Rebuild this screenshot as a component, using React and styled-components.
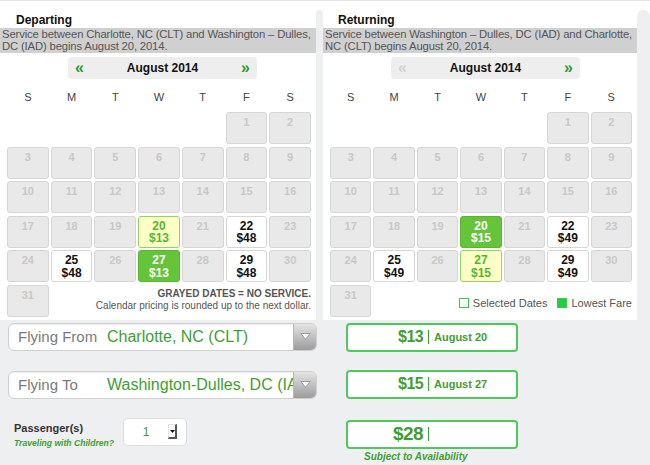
import React from "react";
import styled, { createGlobalStyle } from "styled-components";

const GREEN = "#3f9e33";

const Global = createGlobalStyle`
  html, body { margin: 0; padding: 0; }
  body {
    background: #eeeff1;
    font-family: "Liberation Sans", Arial, sans-serif;
    width: 650px;
    height: 465px;
    overflow: hidden;
  }
`;

const Page = styled.div`
  width: 650px;
  height: 465px;
`;

const CalendarsRow = styled.div`
  display: flex;
  background: #fff;
  border-top: 1px solid #e6e6e6;
`;

const Gutter = styled.div`
  width: ${(p) => p.$w}px;
  flex: ${(p) => (p.$grow ? 1 : "none")};
  margin-top: 9px;
  background: #eeeff1;
  border-radius: 6px 6px 0 0;
`;

const Panel = styled.div`
  width: ${(p) => p.$w}px;
  padding-bottom: 3px;
`;

const Title = styled.div`
  font-size: 12px;
  font-weight: bold;
  color: #111;
  line-height: 14px;
  padding: 12px 0 1px ${(p) => p.$indent}px;
`;

const Notice = styled.div`
  background: #d0d0d0;
  color: #555;
  font-size: 11.3px;
  letter-spacing: -0.15px;
  line-height: 11.5px;
  height: 25px;
  padding: 1px 0 0 ${(p) => p.$indent}px;
  box-sizing: border-box;
`;

const MonthNav = styled.div`
  width: 189px;
  height: 22px;
  margin: 4px 0 0 ${(p) => p.$left}px;
  background: #eeeeee;
  border-radius: 4px;
  display: flex;
  align-items: center;
  justify-content: space-between;
  padding: 0 7px;
  box-sizing: border-box;
`;

const Arrow = styled.span`
  color: ${(p) => (p.$disabled ? "#d2d2d2" : "#2f9a2a")};
  font-size: 16px;
  font-weight: bold;
  line-height: 14px;
`;

const MonthLabel = styled.span`
  font-size: 12px;
  font-weight: bold;
  color: #111;
`;

const DayGrid = styled.div`
  display: grid;
  grid-template-columns: repeat(7, 1fr);
  column-gap: 2px;
  padding: 0 5px 0 7px;
`;

const Weekdays = styled(DayGrid)`
  margin-top: 12px;
  height: 12px;
`;

const Weekday = styled.div`
  text-align: center;
  font-size: 11px;
  line-height: 12px;
  color: #444;
`;

const Days = styled(DayGrid)`
  margin-top: 9px;
  grid-auto-rows: 32px;
  row-gap: 2.6px;
`;

const cellStyles = {
  off: `background:#e9e9e9;border:1px solid #d6d6d6;color:#c8c8c8;font-size:11px;`,
  price: `background:#fff;border:1px solid #d6d6d6;color:#111;font-size:12px;`,
  selected: `background:#ffffc6;border:1px solid #8ed468;color:#55b632;font-size:12px;`,
  lowest: `background:#64c43a;border:1px solid #5ab533;color:#fff;font-size:12px;`,
};

const Cell = styled.div`
  box-sizing: border-box;
  border-radius: 3px;
  text-align: center;
  font-weight: bold;
  line-height: 12.5px;
  padding-top: 3px;
  ${(p) => cellStyles[p.$variant]}
`;

const Note = styled.div`
  grid-column: 2 / 8;
  align-self: end;
  text-align: right;
  padding-bottom: ${(p) => p.$pb}px;
  color: #555;
  font-size: 10px;
  line-height: 12px;
`;

const NoteStrong = styled.div`
  font-weight: bold;
  font-size: 10px;
`;

const Legend = styled.div`
  display: flex;
  justify-content: flex-end;
  align-items: center;
  gap: 4px;
  font-size: 11px;
  color: #555;
`;

const Swatch = styled.span`
  display: inline-block;
  width: 8px;
  height: 8px;
  border: 1px solid #33cc44;
  background: ${(p) => (p.$filled ? "#22cc44" : "#fff")};
  margin-left: ${(p) => p.$ml || 0}px;
`;

const FormArea = styled.div`
  display: flex;
  padding-top: 3px;
`;

const LeftCol = styled.div`
  width: 309px;
  margin-left: 8px;
  display: flex;
  flex-direction: column;
`;

const RightCol = styled.div`
  margin-left: 29px;
  width: 172px;
  display: flex;
  flex-direction: column;
`;

const Select = styled.div`
  height: 28px;
  box-sizing: border-box;
  border: 1px solid #cfcfcf;
  border-radius: 6px;
  background: #fff;
  box-shadow: inset 0 1px 2px rgba(0, 0, 0, 0.08);
  display: flex;
  align-items: center;
  overflow: hidden;
  margin-top: ${(p) => p.$mt || 0}px;
`;

const SelectLabel = styled.span`
  width: 89px;
  padding-left: 9px;
  flex: none;
  font-size: 15px;
  color: #7b7b7b;
`;

const SelectValue = styled.span`
  flex: 1;
  font-size: 16px;
  color: ${GREEN};
  white-space: nowrap;
  overflow: hidden;
`;

const DropButton = styled.span`
  width: 22px;
  align-self: stretch;
  flex: none;
  background: linear-gradient(#e4e4e4, #9c9c9c);
  border-left: 1px solid #b5b5b5;
  display: flex;
  align-items: center;
  justify-content: center;
`;

const PassengerRow = styled.div`
  display: flex;
  align-items: flex-start;
  margin-top: 19px;
`;

const PassengerText = styled.div`
  width: 109px;
  padding: 4px 0 0 6px;
`;

const PassengerLabel = styled.div`
  font-size: 11px;
  font-weight: bold;
  color: #333;
  line-height: 13px;
`;

const ChildrenLink = styled.div`
  font-size: 8.6px;
  font-style: italic;
  font-weight: bold;
  color: ${GREEN};
  line-height: 12px;
  margin-top: 2px;
`;

const SmallSelect = styled.div`
  width: 64px;
  height: 28px;
  box-sizing: border-box;
  border: 1px solid #dedede;
  border-radius: 5px;
  background: #fff;
  display: flex;
  align-items: center;
`;

const SmallValue = styled.span`
  width: 44px;
  text-align: center;
  font-size: 12px;
  color: ${GREEN};
`;

const SmallArrow = styled.span`
  width: 9px;
  height: 15px;
  box-sizing: border-box;
  border: 1px solid #e0e0e0;
  border-right: 2px solid #555;
  border-bottom: 2px solid #555;
  display: flex;
  align-items: center;
  justify-content: center;
`;

const PriceBox = styled.div`
  height: 29px;
  box-sizing: border-box;
  border: 2px solid #4fc85c;
  border-radius: 4px;
  background: #fff;
  display: flex;
  align-items: center;
  margin-top: ${(p) => p.$mt || 0}px;
`;

const Amount = styled.span`
  width: 75px;
  text-align: right;
  font-weight: bold;
  color: ${GREEN};
  font-size: ${(p) => (p.$big ? 19 : 16)}px;
  letter-spacing: -0.6px;
`;

const Divider = styled.span`
  width: 1px;
  height: 14px;
  background: ${GREEN};
  margin: 0 5px 0 5px;
`;

const PriceDate = styled.span`
  font-size: 11px;
  font-weight: bold;
  color: ${GREEN};
`;

const Subject = styled.div`
  margin: 2px 0 0 18px;
  font-size: 10px;
  font-weight: bold;
  font-style: italic;
  color: ${GREEN};
`;

const WEEK = ["S", "M", "T", "W", "T", "F", "S"];

function buildDays(prices) {
  const out = [];
  for (let i = 0; i < 5; i++) out.push({ blank: true, key: "b" + i });
  for (let d = 1; d <= 31; d++) {
    const p = prices[d];
    out.push({ key: d, day: d, price: p ? p[0] : null, variant: p ? p[1] : "off" });
  }
  return out;
}

function Calendar({ title, notice, prices, prevDisabled, titleIndent, noticeIndent, navLeft, footer, width }) {
  const days = buildDays(prices);
  return (
    <Panel $w={width}>
      <Title $indent={titleIndent}>{title}</Title>
      <Notice $indent={noticeIndent}>{notice}</Notice>
      <MonthNav $left={navLeft}>
        <Arrow $disabled={prevDisabled}>«</Arrow>
        <MonthLabel>August 2014</MonthLabel>
        <Arrow>»</Arrow>
      </MonthNav>
      <Weekdays>
        {WEEK.map((w, i) => (
          <Weekday key={i}>{w}</Weekday>
        ))}
      </Weekdays>
      <Days>
        {days.map((d) =>
          d.blank ? (
            <div key={d.key} />
          ) : (
            <Cell key={d.key} $variant={d.variant}>
              {d.day}
              {d.price && (
                <>
                  <br />
                  {d.price}
                </>
              )}
            </Cell>
          )
        )}
        {footer}
      </Days>
    </Panel>
  );
}

const DropArrow = () => (
  <svg width="11" height="9" viewBox="0 0 11 9">
    <path d="M1 1.5 L10 1.5 L5.5 7.5 Z" fill="#fff" stroke="#8a8a8a" strokeWidth="0.8" />
  </svg>
);

export default function App() {
  return (
    <Page>
      <Global />
      <CalendarsRow>
        <Calendar
          width={316}
          title="Departing"
          titleIndent={16}
          noticeIndent={2}
          navLeft={68}
          notice="Service between Charlotte, NC (CLT) and Washington – Dulles, DC (IAD) begins August 20, 2014."
          prices={{
            20: ["$13", "selected"],
            22: ["$48", "price"],
            25: ["$48", "price"],
            27: ["$13", "lowest"],
            29: ["$48", "price"],
          }}
          footer={
            <Note $pb={5}>
              <NoteStrong>GRAYED DATES = NO SERVICE.</NoteStrong>
              Calendar pricing is rounded up to the next dollar.
            </Note>
          }
        />
        <Gutter $w={7} />
        <Calendar
          width={314}
          title="Returning"
          titleIndent={15}
          noticeIndent={2}
          navLeft={68}
          prevDisabled
          notice="Service between Washington – Dulles, DC (IAD) and Charlotte, NC (CLT) begins August 20, 2014."
          prices={{
            20: ["$15", "lowest"],
            22: ["$49", "price"],
            25: ["$49", "price"],
            27: ["$15", "selected"],
            29: ["$49", "price"],
          }}
          footer={
            <Note $pb={8}>
              <Legend>
                <Swatch />
                <span>Selected Dates</span>
                <Swatch $filled $ml={6} />
                <span>Lowest Fare</span>
              </Legend>
            </Note>
          }
        />
        <Gutter $grow />
      </CalendarsRow>
      <FormArea>
        <LeftCol>
          <Select>
            <SelectLabel>Flying From</SelectLabel>
            <SelectValue>Charlotte, NC (CLT)</SelectValue>
            <DropButton>
              <DropArrow />
            </DropButton>
          </Select>
          <Select $mt={20}>
            <SelectLabel>Flying To</SelectLabel>
            <SelectValue>Washington-Dulles, DC (IAD)</SelectValue>
            <DropButton>
              <DropArrow />
            </DropButton>
          </Select>
          <PassengerRow>
            <PassengerText>
              <PassengerLabel>Passenger(s)</PassengerLabel>
              <ChildrenLink>Traveling with Children?</ChildrenLink>
            </PassengerText>
            <SmallSelect>
              <SmallValue>1</SmallValue>
              <SmallArrow>
                <svg width="5" height="3" viewBox="0 0 5 3">
                  <path d="M0 0 L5 0 L2.5 3 Z" fill="#111" />
                </svg>
              </SmallArrow>
            </SmallSelect>
          </PassengerRow>
        </LeftCol>
        <RightCol>
          <PriceBox>
            <Amount>$13</Amount>
            <Divider />
            <PriceDate>August 20</PriceDate>
          </PriceBox>
          <PriceBox $mt={18}>
            <Amount>$15</Amount>
            <Divider />
            <PriceDate>August 27</PriceDate>
          </PriceBox>
          <PriceBox $mt={21}>
            <Amount $big>$28</Amount>
            <Divider />
          </PriceBox>
          <Subject>Subject to Availability</Subject>
        </RightCol>
      </FormArea>
    </Page>
  );
}
